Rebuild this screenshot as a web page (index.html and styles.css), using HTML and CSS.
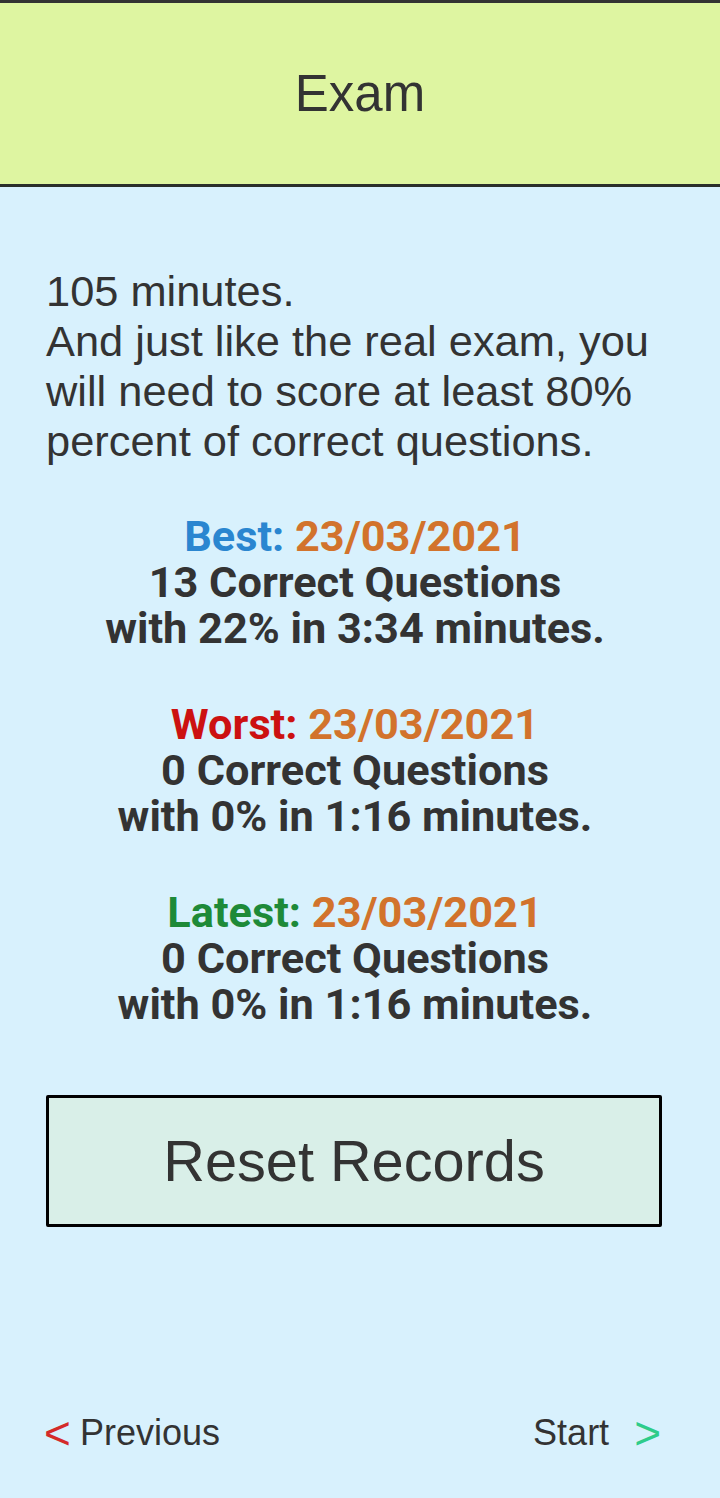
FILE: index.html
```html
<!DOCTYPE html>
<html>
<head>
<meta charset="utf-8">
<link rel="stylesheet" href="styles.css">
</head>
<body>
<div class="page">
  <header class="header"><h1 class="title">Exam</h1></header>
  <main class="content">
    <p class="intro">105 minutes.<br>And just like the real exam, you will need to score at least 80% percent of correct questions.</p>
    <div class="records">
      <div class="record">
        <div><span class="label best">Best:</span> <span class="date">23/03/2021</span></div>
        <div>13 Correct Questions</div>
        <div>with 22% in 3:34 minutes.</div>
      </div>
      <div class="record">
        <div><span class="label worst">Worst:</span> <span class="date">23/03/2021</span></div>
        <div>0 Correct Questions</div>
        <div>with 0% in 1:16 minutes.</div>
      </div>
      <div class="record">
        <div><span class="label latest">Latest:</span> <span class="date">23/03/2021</span></div>
        <div>0 Correct Questions</div>
        <div>with 0% in 1:16 minutes.</div>
      </div>
    </div>
    <button class="reset">Reset Records</button>
  </main>
  <footer class="footer">
    <a class="nav prev"><span class="arrow red">&lt;</span>Previous</a>
    <a class="nav next">Start<span class="arrow green">&gt;</span></a>
  </footer>
</div>
</body>
</html>
```
FILE: styles.css
```css
html, body {
  margin: 0;
  padding: 0;
}
body {
  background: #d8f1fd;
  color: #333333;
  font-family: "Liberation Sans", Arial, sans-serif;
}
.page {
  height: 1498px;
  display: flex;
  flex-direction: column;
}
.header {
  background: #def5a1;
  border-top: 3px solid #333;
  border-bottom: 3px solid #2a2f2a;
  height: 181px;
  display: flex;
  align-items: center;
  justify-content: center;
}
.title {
  margin: 0;
  font-weight: normal;
  font-size: 51px;
  line-height: 1;
  color: #333;
}
.content {
  padding: 79px 46px 0 46px;
  display: flex;
  flex-direction: column;
}
.intro {
  margin: 0;
  font-size: 43.4px;
  line-height: 50px;
}
.records {
  margin-top: 48px;
  width: 618px;
  display: flex;
  flex-direction: column;
  gap: 50px;
  font-family: Roboto, "Liberation Sans", sans-serif;
  font-weight: bold;
  font-size: 43.3px;
  line-height: 46px;
  text-align: center;
  color: #333;
}
.best { color: #2a86d0; }
.worst { color: #cc1111; }
.latest { color: #1e8a38; }
.date { color: #d2732c; }
.reset {
  margin-top: 67px;
  width: 616px;
  height: 132px;
  background: #d9efe8;
  border: 3px solid #000;
  border-radius: 2px;
  font-family: "Liberation Sans", sans-serif;
  font-size: 57.7px;
  color: #333;
  padding: 0;
}
.footer {
  margin-top: auto;
  display: flex;
  justify-content: space-between;
  align-items: center;
  padding: 0 59px 45px 44px;
}
.nav {
  font-size: 36px;
  line-height: 40px;
  color: #333;
  display: flex;
  align-items: center;
}
.arrow {
  font-family: "Liberation Sans", sans-serif;
  font-size: 46px;
  line-height: 40px;
}
.red { color: #d42a2a; margin-right: 9px; }
.green { color: #2ecc8a; margin-left: 25px; }
```
